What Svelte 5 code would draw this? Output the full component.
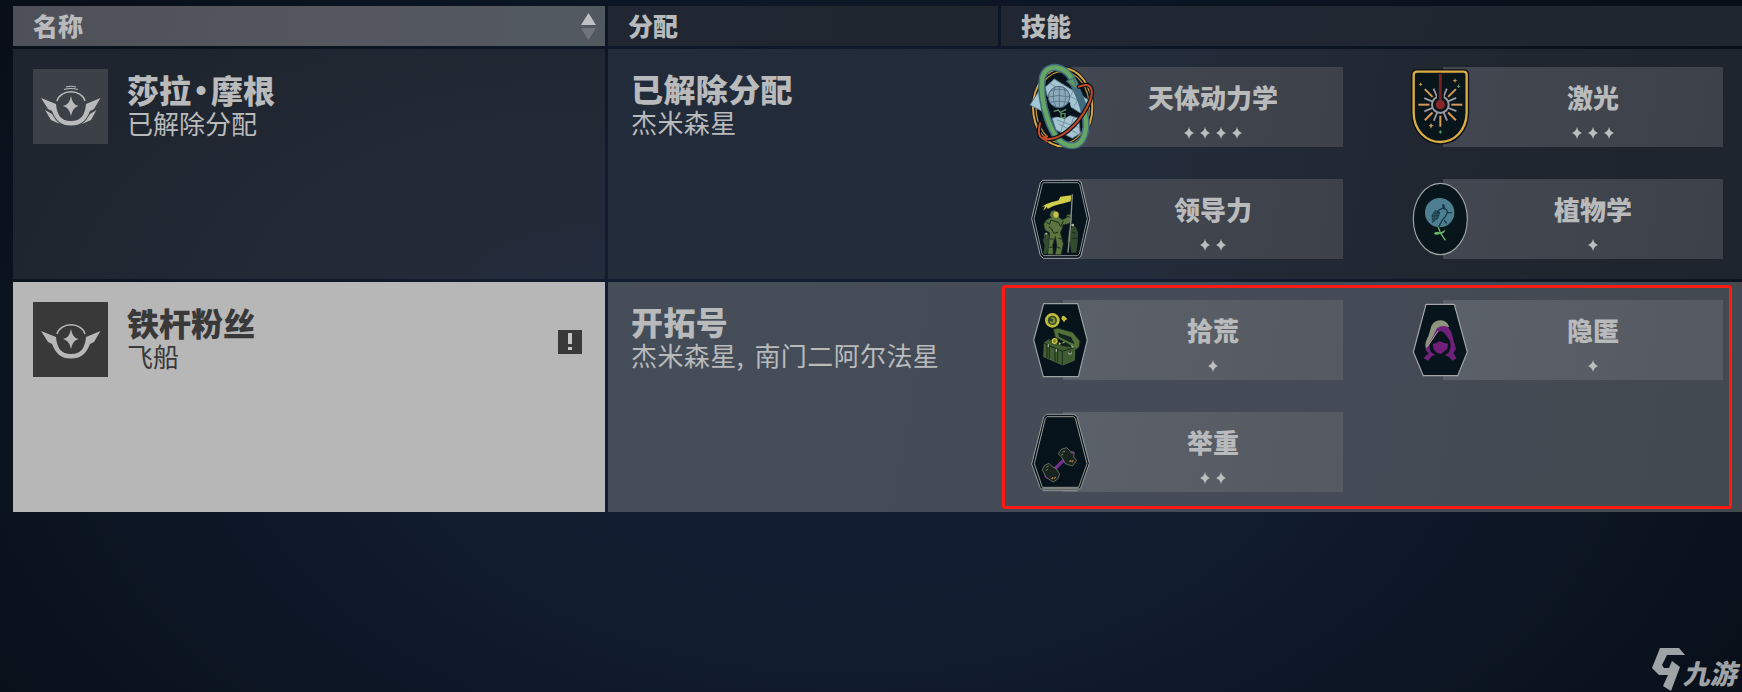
<script>
  const crew = [
    {
      name: ['莎拉', '摩根'], status: '已解除分配', post: '已解除分配', place: '杰米森星', selected: false,
      skills: [
        { label: '天体动力学', rank: 4, icon: 'orbit', top: -17 },
        { label: '激光', rank: 3, icon: 'laser', top: -17 },
        { label: '领导力', rank: 2, icon: 'leader', top: -14 },
        { label: '植物学', rank: 1, icon: 'botany', top: -14 }
      ]
    },
    {
      name: ['铁杆粉丝'], status: '飞船', post: '开拓号', place: '杰米森星, 南门二阿尔法星', selected: true,
      skills: [
        { label: '拾荒', rank: 1, icon: 'scavenge', top: -10 },
        { label: '隐匿', rank: 1, icon: 'stealth', top: -10 },
        { label: '举重', rank: 2, icon: 'lifting', top: -12 }
      ]
    }
  ];
  const rays = [0, 45, 90, 135, 180, 225, 270, 315];
  const shortRays = [22, 67, 112, 157, 202, 247, 292, 337];
</script>

{#snippet emblem(full)}
  <svg class="emblem" viewBox="0 0 75 75">
    <g fill="currentColor">
      <path d="M38 27 Q39.5 36 45.5 37 Q39.5 38.5 38 47 Q36.5 38.5 30 37 Q36.500 36 38 27Z" />
      <path d="M8 29 L23 35 C24 46 28 52 38 52 C48 52 52 46 53 35 L67.500 29 L61 40 L57 42 C53 52 48 56.500 38 56.500 C28 56.500 23 52 19 42 L15 40Z" />
      {#if full}
        <path d="M12 41 L19 45 Q22 51 27 55 L18 51Z M63.500 41 L57 45 Q54 51 49 55 L58 51Z" />
      {/if}
    </g>
    <g fill="none" stroke="currentColor" stroke-width="1.500">
      <path d="M24 32 A14.300 11.500 0 0 1 52 32" />
      {#if full}<path d="M31 20.500 Q38 18.500 45 20.500 M33 18 Q38 16.500 43 18" stroke-width="1.200" />{/if}
    </g>
  </svg>
{/snippet}

{#snippet badge(icon, top)}
  <svg class="badge" viewBox="0 0 330 330" style:top="{top}px">
    {#if icon === 'orbit'}
      <ellipse cx="158" cy="172" rx="87" ry="116" fill="#07121b" stroke="#07121b" stroke-width="14" />
      <ellipse cx="158" cy="172" rx="89" ry="117" fill="none" stroke="#dca640" stroke-width="6" />
      <ellipse cx="158" cy="172" rx="80" ry="108" fill="none" stroke="#ba913d" stroke-width="4" />
      <path d="M60 165 L86 124 L108 190Z" fill="#a4c7d5" stroke="#56758a" stroke-width="3" />
      <path d="M105 112 L133 87 L236 150 L211 189 L173 165 L112 139Z" fill="#a5c5d3" stroke="#557689" stroke-width="3" />
      <path d="M126 205 L165 192 L206 205 L211 250 L187 265 L138 240Z" fill="#a5c5d3" stroke="#557689" stroke-width="3" />
      <path d="M190 122 L172 155 M212 134 L193 168 M120 100 L222 164 M146 222 L202 250 M170 192 L152 245 M191 200 L177 249 M140 210 L205 232" stroke="#7594a4" stroke-width="3" fill="none" />
      <path d="M119 157 L180 157 L185 193 L164 206 L128 197Z" fill="#06121b" />
      <path d="M131 184 L145 180 L151 187 L169 178 M153 202 V191 H165 V203Z" fill="none" stroke="#5c9265" stroke-width="4" />
      <circle cx="147" cy="141" r="32" fill="#8eaaba" stroke="#476779" stroke-width="3" />
      <path d="M120 123 Q147 112 174 123 M116 141 Q147 132 178 141 M119 157 Q148 150 176 157 M135 113 Q123 143 138 170 M148 109 V172 M162 114 Q172 143 160 170" fill="none" stroke="#4f7083" stroke-width="2.500" />
      <g fill="none" stroke-linecap="round" stroke-linejoin="round">
        <path d="M196 106 C170 42 108 36 97 84 C88 150 121 270 170 284 C215 300 238 250 224 188 C218 160 206 130 190 100" stroke="#426c7d" stroke-width="22" />
        <path d="M196 106 C170 42 108 36 97 84 C88 150 121 270 170 284 C215 300 238 250 224 188" stroke="#66a766" stroke-width="13" />
        <path d="M170 94 L190 84 L204 122Z" fill="#5f9965" stroke="#426c7d" stroke-width="4" />
        <path d="M207 110 C245 92 258 121 231 172 C201 229 152 268 111 268 C83 267 84 247 90 220" stroke="#081219" stroke-width="13" />
        <path d="M207 110 C245 92 258 121 231 172 C201 229 152 268 111 268 C83 267 84 247 90 220" stroke="#c54b29" stroke-width="6" />
        <path d="M92 263 L112 256 L110 277Z" fill="#c54b29" stroke="#c54b29" />
      </g>
    {:else if icon === 'laser'}
      <path d="M80 63 H222 Q232 63 232 74 V190 C230 243 195 278 151 278 C107 278 70 242 69 190 V74 Q69 63 80 63Z" fill="#08151b" stroke="#0c1014" stroke-width="11" />
      <path d="M81 65 H221 Q230 65 230 75 V190 C228 241 194 276 151 276 C108 276 72 241 71 190 V75 Q71 65 81 65Z" fill="#08151b" stroke="#dbae45" stroke-width="7" />
      {#each rays as a}
        {#if a !== 270}<path d="M184 164 H217" transform="rotate({a} 151 164)" stroke="#d79b59" stroke-width="6" />{/if}
      {/each}
      {#each shortRays as a}<path d="M176 164 H203" transform="rotate({a} 151 164)" stroke="#9b99a1" stroke-width="5.500" />{/each}
      <circle cx="151" cy="164" r="25" fill="#08151b" stroke="#9b99a1" stroke-width="6" />
      <path d="M151 73 V160" stroke="#08151b" stroke-width="20" />
      <path d="M151 72 V164" stroke="#761e24" stroke-width="9" />
      <circle cx="151" cy="164" r="14" fill="#86262b" />
      <path d="M195 84 L197 90 L203 92 L197 94 L195 100 L193 94 L187 92 L193 90Z M92 97 L94 101 L98 103 L94 105 L92 109 L90 105 L86 103 L90 101Z M123 219 L126 225 L132 227 L126 229 L123 236 L120 229 L115 227 L120 225Z" fill="#cb9656" />
      <path d="M206 104 V114 M201 109 H211 M151 241 V251 M146 246 H156" stroke="#5aa56b" stroke-width="3" />
    {:else if icon === 'leader'}
      <path d="M98 46 H205 L213 51 L239 161 L213 273 L204 280 H100 L91 272 L65 161 L91 53Z" fill="#07141b" stroke="#a4a7aa" stroke-width="3" />
      <path d="M101 53 H203 L209 58 L232 161 L208 267 L202 272 H101 L96 266 L72 161 L97 58Z" fill="none" stroke="#8b9194" stroke-width="3" />
      <path d="M103 218 L101 208 L106 202 L114 205 L119 220 L121 242 L111 266 H100 L104 240 L98 225Z M183 188 L188 181 L198 187 L204 203 L203 233 L199 263 H184 L180 230 L173 230 L177 197Z" fill="#334c2f" />
      <path d="M124 157 L119 152 L122 140 L133 135 L145 142 L147 157 L157 164 L170 158 L169 150 L183 147 L186 165 L177 176 L159 179 L156 191 L151 203 L160 237 L153 269 H135 L141 243 L136 214 L128 239 L130 268 H113 L116 243 L119 203 L105 195 L101 177 L109 165Z" fill="#5c743e" stroke="#1c3022" stroke-width="2" />
      <path d="M109 172 L119 178 L122 165 L145 172 L152 185 L160 168 M116 185 L125 192 L132 205 L145 201 M120 222 L130 222 M145 219 L154 222 M119 247 L127 246 M142 247 L152 250 M171 154 L183 158 M185 201 L197 205 M188 220 L201 220" fill="none" stroke="#172b20" stroke-width="3" />
      <ellipse cx="138" cy="149" rx="8" ry="9" fill="#c8bf48" />
      <path d="M187 88 Q184 173 174 263" fill="none" stroke="#86908b" stroke-width="4" />
      <path d="M184 91 L151 95 L146 106 C127 112 112 113 96 126 L105 124 L100 137 L111 126 L113 132 C131 120 145 119 166 113 L182 109Z" fill="#d1ce4b" />
      <circle cx="188" cy="180" r="4" fill="#b3bca5" /><circle cx="109" cy="206" r="3" fill="#b3bca5" />
    {:else if icon === 'botany'}
      <ellipse cx="151" cy="162" rx="81" ry="107" fill="#08151a" stroke="#a1a5a6" stroke-width="3.500" />
      <circle cx="149" cy="143" r="44" fill="#4d7f91" />
      <path d="M145 191 Q153 166 166 155 Q177 138 167 132 Q150 127 139 145 M159 132 V117 M164 132 L161 119 M170 143 H185 M163 166 L170 175" fill="none" stroke="#153548" stroke-width="4" />
      <path d="M125 150 L136 136 L151 141 L144 161 L126 174Z" fill="#163947" />
      <path d="M129 149 L148 147 M126 158 L146 155 M126 167 L140 161 M132 142 L128 171 M139 138 L136 166" stroke="#466f7d" stroke-width="1.500" />
      <path d="M145 187 L151 203 L166 226" fill="none" stroke="#69b66b" stroke-width="4" />
      <path d="M131 206 Q138 196 151 203 L166 194 Q163 207 150 206 Q139 212 131 206Z" fill="#6db86b" />
    {:else if icon === 'scavenge'}
      <path d="M101 41 H203 L232 150 L205 260 H100 L71 150Z" fill="#07131b" stroke="#9ca2a3" stroke-width="3.500" />
      <path d="M130 118 L142 114 L188 127 L210 154 L207 171 L199 178 L170 160 L136 142Z" fill="#547039" stroke="#1c3322" stroke-width="3" />
      <path d="M144 128 L183 141 L194 162 L172 153 L147 140Z" fill="#122420" />
      <path d="M103 158 L117 149 L195 174 L193 211 L158 225 L101 200Z" fill="#405d32" stroke="#627846" stroke-width="2" />
      <path d="M103 160 L156 184 L193 173 M157 184 V225 M111 163 V205 M118 166 V207 M135 175 V215 M143 180 V218" fill="none" stroke="#172c20" stroke-width="3" />
      <path d="M116 151 L159 169 L189 172 L157 156Z" fill="#10221c" />
      <circle cx="127" cy="91" r="18" fill="#2f4b2d" stroke="#c2bd39" stroke-width="8" />
      <path d="M120 83 Q134 79 136 91 Q137 103 121 100 L119 93 L128 96 L130 88Z" fill="#8c9436" />
      <circle cx="134" cy="153" r="7" fill="#82842f" stroke="#c7c14c" stroke-width="4" />
      <path d="M162 77 L166 81 L172 87 L166 91 L162 97 L158 91 L154 87 L156 79Z M153 161 L149 165 L145 161 L149 157Z" fill="#c5c03c" />
      <path d="M115 163 V171 M139 177 V185 M184 166 L190 173 M158 159 L164 156" stroke="#a5ad9c" stroke-width="4" /><circle cx="180" cy="188" r="6" fill="#9ea69b" /><circle cx="180" cy="185" r="5" fill="#344d32" />
    {:else if icon === 'stealth'}
      <path d="M108 43 H193 L232 186 L203 257 H100 L70 186Z" fill="#08141b" stroke="#a3a7a9" stroke-width="3.500" />
      <path d="M110 180 C102 167 108 151 115 139 L124 108 Q132 91 153 91 Q170 91 178 111 L151 112 L132 142Z" fill="#8d957c" />
      <path d="M106 180 L130 137 L138 119 Q151 103 174 111 L184 126 L191 153 L198 176 L190 190 L200 204 L188 212 L176 200 L164 195 H137 L126 198 L114 212 L101 204 L116 190Z" fill="#70227a" />
      <path d="M124 187 C112 169 122 153 135 137 C143 123 155 120 163 129 L177 148 C185 164 182 178 175 189 C160 200 137 201 124 187Z" fill="#08141b" />
      <path d="M112 170 L144 123" stroke="#b2a7a7" stroke-width="3" />
      <path d="M128 162 Q140 160 149 153 Q160 159 174 161 L172 177 L153 192 Q138 190 131 177Z" fill="#702078" />
    {:else}
      <path d="M109 43 H192 L201 50 L238 190 L213 262 L203 272 H99 L90 262 L65 192 L101 51Z" fill="#07131b" stroke="#999d99" stroke-width="3" />
      <path d="M111 50 H190 L196 55 L231 191 L206 262 H97 L73 191 L106 55Z" fill="none" stroke="#969b96" stroke-width="3" />
      <path d="M97 266 H206" stroke="#7c827f" stroke-width="6" />
      <path d="M123 218 L175 167" stroke="#762d8d" stroke-width="10" />
      <g fill="#17231d" stroke="#737b69" stroke-width="2.500" stroke-linejoin="round">
        <path d="M97 209 L104 196 L117 190 L128 201 L138 206 L149 222 L143 237 L130 246 L109 233Z" />
        <path d="M145 162 L154 148 L170 143 L181 154 L193 157 L191 171 L200 181 L187 198 L166 191 L157 174Z" />
      </g>
      <path d="M104 227 L111 234 M182 156 L190 161" stroke="#773787" stroke-width="5" />
      <path d="M109 202 L116 198 M107 212 L113 208 M158 157 L165 153 M153 166 L159 162" stroke="#7f8b72" stroke-width="3" />
      <path d="M125 237 L130 232 M133 236 L137 231 M178 185 L184 181 M185 186 L190 181" stroke="#c18044" stroke-width="3.500" />
    {/if}
  </svg>
{/snippet}

<main>
  <header class="heads">
    <div class="head sorted"><span>名称</span>
      <svg class="sort" viewBox="0 0 15 27"><path d="M7.500 0 L15 12 H0Z" fill="#bfc1c1" /><path d="M0 15 H15 L7.500 27Z" fill="#70757b" /></svg>
    </div>
    <div class="head assignment"><span>分配</span></div>
    <div class="head ability"><span>技能</span></div>
  </header>

  {#each crew as person}
    <section class="row" class:selected={person.selected}>
      <div class="person">
        <div class="avatar">{@render emblem(!person.selected)}</div>
        <div class="copy"><h2>{person.name[0]}{#if person.name[1]}<span class="dot">·</span>{person.name[1]}{/if}</h2><p>{person.status}</p></div>
        {#if person.selected}<div class="alert"><i></i><b></b></div>{/if}
      </div>
      <div class="details">
        <div class="copy post"><h2>{person.post}</h2><p>{person.place}</p></div>
        <div class="skills">
          {#each person.skills as skill}
            <article>
              {@render badge(skill.icon, skill.top)}
              <h3>{skill.label}</h3>
              <div class="rank">
                {#each Array(skill.rank) as _}
                  <svg viewBox="0 0 10 12"><path d="M5 0 Q5.900 4.600 10 6 Q5.900 7.400 5 12 Q4.100 7.400 0 6 Q4.100 4.600 5 0Z" /></svg>
                {/each}
              </div>
            </article>
          {/each}
        </div>
        {#if person.selected}<div class="outline"></div>{/if}
      </div>
    </section>
  {/each}

  <footer>
    <svg viewBox="0 0 33 44"><path d="M8 0 H27 L33 7 H15 L10 17 L12 20 H17 L20 13 L28 19 L19 43 L11 38 L16 27 H7 L0 20Z" fill="#a0a3a6" /></svg>
    <span>九游</span>
  </footer>
</main>

<style>
  :global(body) { margin: 0; background: #0b121e; }
  main {
    box-sizing: border-box; width: 1742px; height: 692px; padding: 6px 0 0 13px; overflow: hidden;
    display: flex; flex-direction: column; gap: 3px; position: relative;
    font-family: "Noto Sans CJK SC", sans-serif; color: #b9babb;
    background: radial-gradient(ellipse 1050px 620px at 850px 400px, #131f35 0%, #111c2f 40%, #0c1523 70%, #080f18 100%);
  }
  h2, h3, p { margin: 0; white-space: nowrap; }
  .heads { display: grid; grid-template-columns: 592px 390px 1fr; gap: 3px; height: 40px; flex: none; }
  .head { box-sizing: border-box; display: flex; align-items: center; justify-content: space-between; padding-left: 20px; font-size: 25px; font-weight: 900; line-height: 40px; background: linear-gradient(100deg, #202733, #20262f); }
  .head span { position: relative; top: -1px; }
  .sorted { background: linear-gradient(100deg, #4d5058, #55575d 50%, #515960); padding-right: 9px; }
  .sort { width: 15px; height: 27px; }
  .row { display: grid; grid-template-columns: 592px 1fr; gap: 3px; height: 230px; flex: none; }
  .person { box-sizing: border-box; display: flex; align-items: flex-start; padding: 20px 23px 0 20px; background: radial-gradient(ellipse 620px 330px at 100% 110%, #232c3c, #222934 60%, #1f252f 100%); }
  .avatar { width: 75px; height: 75px; background: #3c4147; flex: none; }
  .emblem { display: block; width: 75px; height: 75px; }
  .copy { padding: 2px 0 0 19px; }
  .copy h2 { font-size: 32px; line-height: 37px; font-weight: 900; }
  .copy p { font-size: 26px; line-height: 30px; font-weight: 400; }
  .dot { display: inline-block; width: 20px; text-indent: -6px; }
  .details { display: flex; position: relative; background: linear-gradient(100deg, #222b39, #232c3b 45%, #20262f 78%, #1e252e); }
  .post { box-sizing: border-box; width: 455px; flex: none; padding: 21px 0 0 23px; letter-spacing: .4px; word-spacing: 4px; }
  .skills { display: grid; grid-template-columns: 280px 280px; grid-auto-rows: 80px; column-gap: 100px; row-gap: 32px; padding-top: 18px; align-content: start; }
  article { box-sizing: border-box; position: relative; padding: 11px 0 0 20px; text-align: center; background: linear-gradient(100deg, #424751, #3d4149); }
  h3 { font-size: 26px; line-height: 38px; font-weight: 900; }
  .badge { position: absolute; left: -53px; width: 110px; height: 110px; }
  .rank { display: flex; justify-content: center; gap: 6px; padding-top: 11px; }
  .rank svg { width: 10px; height: 12px; fill: #bcbdbd; }
  .selected .person { background: #b7b7b7; color: #393939; }
  .selected .avatar { background: #393939; color: #b7b7b7; }
  .selected .details { background: linear-gradient(100deg, #454d58, #444b57 60%, #42494f); }
  .selected article { background: linear-gradient(100deg, #5b616a, #555a60); }
  .alert { width: 24px; height: 24px; background: #393939; margin: 28px 0 0 auto; display: flex; flex-direction: column; align-items: center; gap: 3px; padding-top: 3px; box-sizing: border-box; }
  .alert i { width: 4px; height: 11px; background: #c5c5c5; }
  .alert b { width: 4px; height: 3px; background: #c5c5c5; }
  .outline { position: absolute; left: 394px; top: 3px; width: 724px; height: 218px; border: 3px solid #ff1b11; border-radius: 3px; }
  footer { position: absolute; left: 1652px; top: 648px; display: flex; color: #a0a3a6; }
  footer svg { width: 33px; height: 44px; }
  footer span { font-size: 27px; line-height: 50px; font-weight: 900; transform: skewX(-12deg); white-space: nowrap; }
</style>
